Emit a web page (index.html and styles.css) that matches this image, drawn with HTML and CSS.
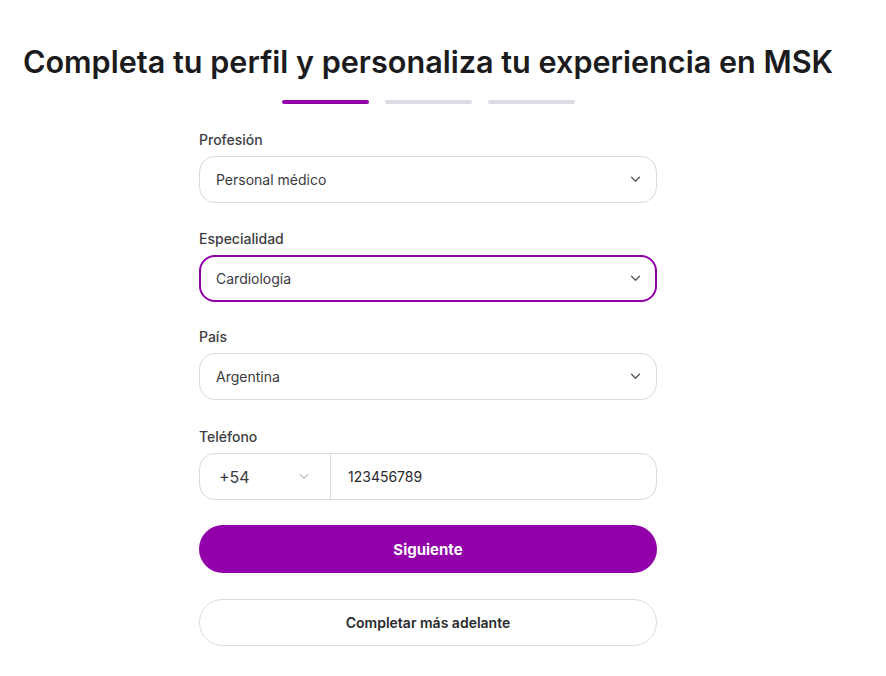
FILE: index.html
```html
<!DOCTYPE html>
<html lang="es">
<head>
<meta charset="utf-8">
<link rel="stylesheet" href="styles.css">
</head>
<body>
<main class="page">
  <h1 class="title">Completa tu perfil y personaliza tu experiencia en MSK</h1>
  <div class="steps">
    <span class="step active"></span>
    <span class="step"></span>
    <span class="step"></span>
  </div>
  <form class="form">
    <div class="field">
      <label class="label">Profesión</label>
      <div class="select">
        <span class="value">Personal médico</span>
        <svg class="chev" viewBox="0 0 12 8" width="11" height="7"><path d="M1.5 1.5 6 6l4.5-4.5" fill="none" stroke="#555" stroke-width="1.5" stroke-linecap="round" stroke-linejoin="round"/></svg>
      </div>
    </div>
    <div class="field">
      <label class="label">Especialidad</label>
      <div class="select focused">
        <span class="value">Cardiología</span>
        <svg class="chev" viewBox="0 0 12 8" width="11" height="7"><path d="M1.5 1.5 6 6l4.5-4.5" fill="none" stroke="#555" stroke-width="1.5" stroke-linecap="round" stroke-linejoin="round"/></svg>
      </div>
    </div>
    <div class="field">
      <label class="label">País</label>
      <div class="select">
        <span class="value">Argentina</span>
        <svg class="chev" viewBox="0 0 12 8" width="11" height="7"><path d="M1.5 1.5 6 6l4.5-4.5" fill="none" stroke="#555" stroke-width="1.5" stroke-linecap="round" stroke-linejoin="round"/></svg>
      </div>
    </div>
    <div class="field">
      <label class="label">Teléfono</label>
      <div class="phone">
        <div class="code">
          <span class="code-value">+54</span>
          <svg class="chev light" viewBox="0 0 12 8" width="12" height="7"><path d="M1.5 1.5 6 6l4.5-4.5" fill="none" stroke="#b9bac2" stroke-width="1.3" stroke-linecap="round" stroke-linejoin="round"/></svg>
        </div>
        <span class="number">123456789</span>
      </div>
    </div>
    <button type="button" class="btn primary">Siguiente</button>
    <button type="button" class="btn secondary">Completar más adelante</button>
  </form>
</main>
</body>
</html>
```
FILE: styles.css
```css
* { box-sizing: border-box; }
html, body { margin: 0; padding: 0; background: #fff; }
body {
  font-family: Inter, "Noto Sans", "Liberation Sans", sans-serif;
  color: #1a1a1a;
}
.page {
  width: 856px;
  display: flex;
  flex-direction: column;
  align-items: center;
  padding-top: 40px;
}
.title {
  margin: 0;
  font-size: 30.6px;
  font-weight: 600;
  line-height: 44px;
  letter-spacing: 0;
  color: #1b1b1d;
  white-space: nowrap;
}
.steps {
  display: flex;
  gap: 16px;
  margin-top: 16px;
}
.step {
  width: 87px;
  height: 4px;
  border-radius: 2px;
  background: #dcdce3;
}
.step.active { background: #9100a9; }
.form {
  width: 458px;
  display: flex;
  flex-direction: column;
  margin-top: 27px;
}
.field {
  display: flex;
  flex-direction: column;
  margin-bottom: 27px;
}
.field:nth-child(3) { margin-top: -1px; }
.field:nth-child(4) { margin-top: 1px; }
.label {
  font-size: 14px;
  line-height: 18px;
  color: #3d3d42;
  font-weight: 500;
  margin-bottom: 7px;
}
.select {
  height: 47px;
  border: 1px solid #d9dae0;
  border-radius: 16px;
  display: flex;
  align-items: center;
  justify-content: space-between;
  padding: 0 15px 0 16px;
}
.select.focused {
  border: 2px solid #9100a9;
  padding: 0 14px 0 15px;
}
.value {
  font-size: 14px;
  color: #3a3a3f;
}
.chev { display: block; }
.phone {
  height: 47px;
  border: 1px solid #d9dae0;
  border-radius: 16px;
  display: flex;
  align-items: center;
}
.code {
  width: 131px;
  height: 100%;
  border-right: 1px solid #d9dae0;
  display: flex;
  align-items: center;
  justify-content: space-between;
  padding: 0 20px 0 19px;
}
.code-value {
  font-size: 16px;
  color: #3a3a3f;
}
.number {
  padding-left: 17px;
  font-size: 14px;
  color: #2a2a2e;
}
.btn {
  font-family: inherit;
  width: 100%;
  border-radius: 999px;
  cursor: pointer;
}
.primary {
  height: 48px;
  margin-top: -2px;
  background: #9100a9;
  border: none;
  color: #fff;
  font-size: 15px;
  font-weight: 700;
}
.secondary {
  height: 47px;
  margin-top: 26px;
  background: #fff;
  border: 1px solid #d9dae0;
  color: #2a2a2e;
  font-size: 14px;
  font-weight: 600;
}
```
